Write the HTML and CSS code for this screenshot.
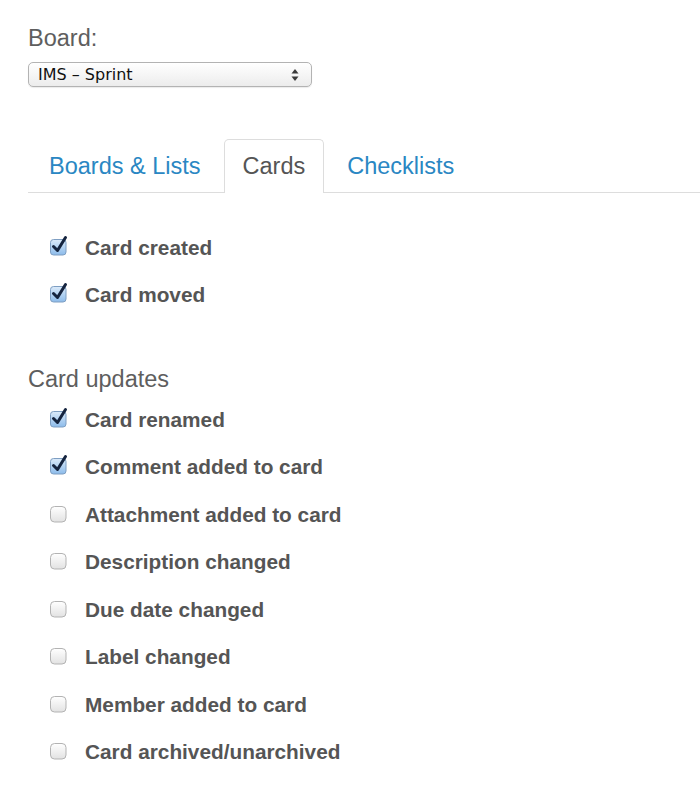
FILE: index.html
```html
<!DOCTYPE html>
<html>
<head>
<meta charset="utf-8">
<link rel="stylesheet" href="styles.css">
</head>
<body>
<svg width="0" height="0" class="defs">
  <defs>
    <linearGradient id="gChecked" x1="0" y1="0" x2="0" y2="1">
      <stop offset="0" stop-color="#dcebfa"/>
      <stop offset="1" stop-color="#8cbbea"/>
    </linearGradient>
    <linearGradient id="gEmpty" x1="0" y1="0" x2="0" y2="1">
      <stop offset="0" stop-color="#ffffff"/>
      <stop offset="1" stop-color="#e2e2e2"/>
    </linearGradient>
  </defs>
</svg>
<div class="page">
  <div class="field-label">Board:</div>
  <div class="select">
    <span class="select-text">IMS – Sprint</span>
    <svg class="select-arrows" width="8" height="14" viewBox="0 0 8 14">
      <path d="M4 1 L7.5 5.5 L0.5 5.5 Z" fill="#3a3a3a"/>
      <path d="M4 13 L7.5 8.5 L0.5 8.5 Z" fill="#3a3a3a"/>
    </svg>
  </div>

  <ul class="tabs">
    <li class="tab">Boards &amp; Lists</li>
    <li class="tab active">Cards</li>
    <li class="tab">Checklists</li>
  </ul>

  <ul class="checks first">
    <li class="check-row"><span class="cb"><svg width="20" height="22" viewBox="0 0 20 22"><rect x="0.5" y="5.5" width="15.5" height="15.5" rx="3" fill="url(#gChecked)" stroke="#7e9ec2"/><path d="M3.5 12.5 L7.5 16.5 L15.5 3.5" fill="none" stroke="#15243f" stroke-width="3" stroke-linecap="round" stroke-linejoin="round"/></svg></span><span class="check-label">Card created</span></li>
    <li class="check-row"><span class="cb"><svg width="20" height="22" viewBox="0 0 20 22"><rect x="0.5" y="5.5" width="15.5" height="15.5" rx="3" fill="url(#gChecked)" stroke="#7e9ec2"/><path d="M3.5 12.5 L7.5 16.5 L15.5 3.5" fill="none" stroke="#15243f" stroke-width="3" stroke-linecap="round" stroke-linejoin="round"/></svg></span><span class="check-label">Card moved</span></li>
  </ul>

  <h3 class="section-title">Card updates</h3>

  <ul class="checks">
    <li class="check-row"><span class="cb"><svg width="20" height="22" viewBox="0 0 20 22"><rect x="0.5" y="5.5" width="15.5" height="15.5" rx="3" fill="url(#gChecked)" stroke="#7e9ec2"/><path d="M3.5 12.5 L7.5 16.5 L15.5 3.5" fill="none" stroke="#15243f" stroke-width="3" stroke-linecap="round" stroke-linejoin="round"/></svg></span><span class="check-label">Card renamed</span></li>
    <li class="check-row"><span class="cb"><svg width="20" height="22" viewBox="0 0 20 22"><rect x="0.5" y="5.5" width="15.5" height="15.5" rx="3" fill="url(#gChecked)" stroke="#7e9ec2"/><path d="M3.5 12.5 L7.5 16.5 L15.5 3.5" fill="none" stroke="#15243f" stroke-width="3" stroke-linecap="round" stroke-linejoin="round"/></svg></span><span class="check-label">Comment added to card</span></li>
    <li class="check-row"><span class="cb"><svg width="20" height="22" viewBox="0 0 20 22"><rect x="0.5" y="5.5" width="15.5" height="15.5" rx="4" fill="url(#gEmpty)" stroke="#b3b3b3"/></svg></span><span class="check-label">Attachment added to card</span></li>
    <li class="check-row"><span class="cb"><svg width="20" height="22" viewBox="0 0 20 22"><rect x="0.5" y="5.5" width="15.5" height="15.5" rx="4" fill="url(#gEmpty)" stroke="#b3b3b3"/></svg></span><span class="check-label">Description changed</span></li>
    <li class="check-row"><span class="cb"><svg width="20" height="22" viewBox="0 0 20 22"><rect x="0.5" y="5.5" width="15.5" height="15.5" rx="4" fill="url(#gEmpty)" stroke="#b3b3b3"/></svg></span><span class="check-label">Due date changed</span></li>
    <li class="check-row"><span class="cb"><svg width="20" height="22" viewBox="0 0 20 22"><rect x="0.5" y="5.5" width="15.5" height="15.5" rx="4" fill="url(#gEmpty)" stroke="#b3b3b3"/></svg></span><span class="check-label">Label changed</span></li>
    <li class="check-row"><span class="cb"><svg width="20" height="22" viewBox="0 0 20 22"><rect x="0.5" y="5.5" width="15.5" height="15.5" rx="4" fill="url(#gEmpty)" stroke="#b3b3b3"/></svg></span><span class="check-label">Member added to card</span></li>
    <li class="check-row"><span class="cb"><svg width="20" height="22" viewBox="0 0 20 22"><rect x="0.5" y="5.5" width="15.5" height="15.5" rx="4" fill="url(#gEmpty)" stroke="#b3b3b3"/></svg></span><span class="check-label">Card archived/unarchived</span></li>
  </ul>
</div>
</body>
</html>
```

FILE: styles.css
```css
html, body {
  margin: 0;
  padding: 0;
  background: #ffffff;
}

.defs {
  position: absolute;
  width: 0;
  height: 0;
}

.page {
  padding: 25px 0 0 28px;
  font-family: "Liberation Sans", Arial, sans-serif;
  color: #555555;
}

.field-label {
  font-size: 23.5px;
  line-height: 27px;
  color: #5e5e5e;
}

.select {
  margin-top: 10px;
  height: 23px;
  border: 1px solid #b3b3b3;
  border-radius: 5px;
  background: linear-gradient(#ffffff, #ececec);
  box-shadow: 0 1px 1px rgba(0, 0, 0, 0.08);
  display: flex;
  align-items: center;
  justify-content: space-between;
  padding: 0 12px 0 9px;
  width: 261px;
}

.select-text {
  font-family: "DejaVu Sans", sans-serif;
  font-size: 16px;
  color: #111111;
}

.select-arrows {
  display: block;
}

.tabs {
  list-style: none;
  margin: 52px 0 0 0;
  padding: 0;
  display: flex;
  border-bottom: 1px solid #dddddd;
}

.tab {
  height: 52px;
  display: flex;
  align-items: center;
  padding: 0 19px 0 20px;
  margin-right: 2px;
  margin-bottom: -1px;
  border: 1px solid transparent;
  border-bottom: none;
  border-radius: 5px 5px 0 0;
  font-size: 23.5px;
  color: #2a87c3;
}

.tab:first-child {
  padding-right: 20px;
}

.tab.active {
  color: #555555;
  background: #ffffff;
  border-color: #dddddd;
  height: 53px;
  padding: 0 18px 0 18px;
}

.checks {
  list-style: none;
  margin: 0;
  padding: 0 0 0 22px;
}

.checks.first {
  margin-top: 31px;
}

.check-row {
  height: 47.5px;
  display: flex;
  align-items: center;
}

.cb {
  width: 20px;
  height: 22px;
  margin-top: -6px;
  margin-right: 15px;
  display: block;
}

.cb svg {
  display: block;
}

.check-label {
  font-size: 20.8px;
  font-weight: bold;
  color: #555555;
}

.section-title {
  margin: 47px 0 3px 0;
  font-size: 23.5px;
  line-height: 27px;
  font-weight: normal;
  color: #5e5e5e;
}
```
